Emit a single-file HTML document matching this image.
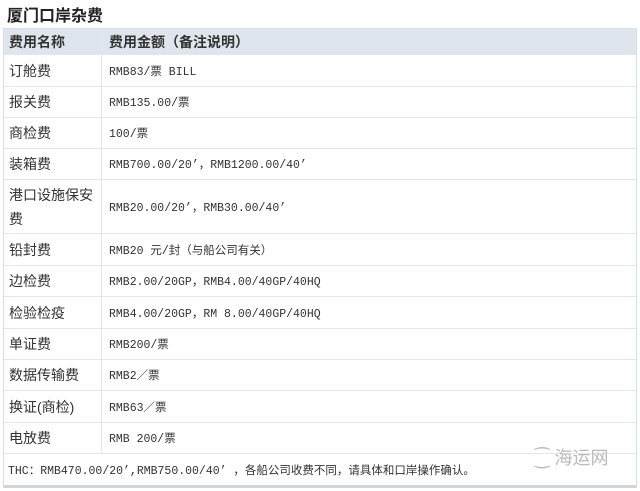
<!DOCTYPE html>
<html><head><meta charset="utf-8"><style>
body{margin:0;width:640px;height:491px;background:#fff;overflow:hidden;font-family:"Liberation Sans","Noto Sans CJK SC",sans-serif;position:relative}
.t{position:absolute;left:7px;top:2px;font-size:16px;font-weight:bold;color:#222}
.tb{position:absolute;left:3px;top:28px;width:632px;border:1px solid #d8dde2;border-bottom:3px solid #cfd6dc}
.r{position:relative;border-top:1px solid #e3e6ea;display:flex;align-items:center}
.r:first-child{border-top:none}
.h{background:#dfe5ec;font-weight:bold;font-size:14px;color:#333}
.a{width:98px;border-right:1px solid #e3e6ea;padding-left:5px;box-sizing:border-box;align-self:stretch;display:flex;align-items:center;font-size:14px;color:#333;line-height:24px}
.b{padding-left:7px;font-family:"Liberation Mono","Noto Sans CJK SC",monospace;font-size:11.5px;color:#333}
.h .b{font-family:"Liberation Sans","Noto Sans CJK SC",sans-serif;font-size:14px;font-weight:bold}
.f{padding-left:4px;font-family:"Liberation Mono","Noto Sans CJK SC",monospace;font-size:11.5px;color:#333}
.wm{position:absolute;left:535px;top:444px;color:#bbb;font-size:18px}
</style></head><body>
<div class="t">厦门口岸杂费</div>
<div class="tb">
<div class="r h" style="height:25px"><div class="a" style="font-weight:bold">费用名称</div><div class="b">费用金额（备注说明）</div></div>
<div class="r" style="height:31px"><div class="a">订舱费</div><div class="b">RMB83/票 BILL</div></div>
<div class="r" style="height:30px"><div class="a">报关费</div><div class="b">RMB135.00/票</div></div>
<div class="r" style="height:30px"><div class="a">商检费</div><div class="b">100/票</div></div>
<div class="r" style="height:30px"><div class="a">装箱费</div><div class="b">RMB700.00/20’，RMB1200.00/40’</div></div>
<div class="r" style="height:53px"><div class="a">港口设施保安费</div><div class="b">RMB20.00/20’，RMB30.00/40’</div></div>
<div class="r" style="height:31px"><div class="a">铅封费</div><div class="b">RMB20 元/封（与船公司有关）</div></div>
<div class="r" style="height:30px"><div class="a">边检费</div><div class="b">RMB2.00/20GP，RMB4.00/40GP/40HQ</div></div>
<div class="r" style="height:31px"><div class="a">检验检疫</div><div class="b">RMB4.00/20GP，RM 8.00/40GP/40HQ</div></div>
<div class="r" style="height:30px"><div class="a">单证费</div><div class="b">RMB200/票</div></div>
<div class="r" style="height:30px"><div class="a">数据传输费</div><div class="b">RMB2／票</div></div>
<div class="r" style="height:31px"><div class="a">换证(商检)</div><div class="b">RMB63／票</div></div>
<div class="r" style="height:30px"><div class="a">电放费</div><div class="b">RMB 200/票</div></div>
<div class="r" style="height:31px"><div class="f">THC：RMB470.00/20’,RMB750.00/40’ ，各船公司收费不同，请具体和口岸操作确认。</div></div>
</div>
<div class="wm">⁐ 海运网</div>
</body></html>
